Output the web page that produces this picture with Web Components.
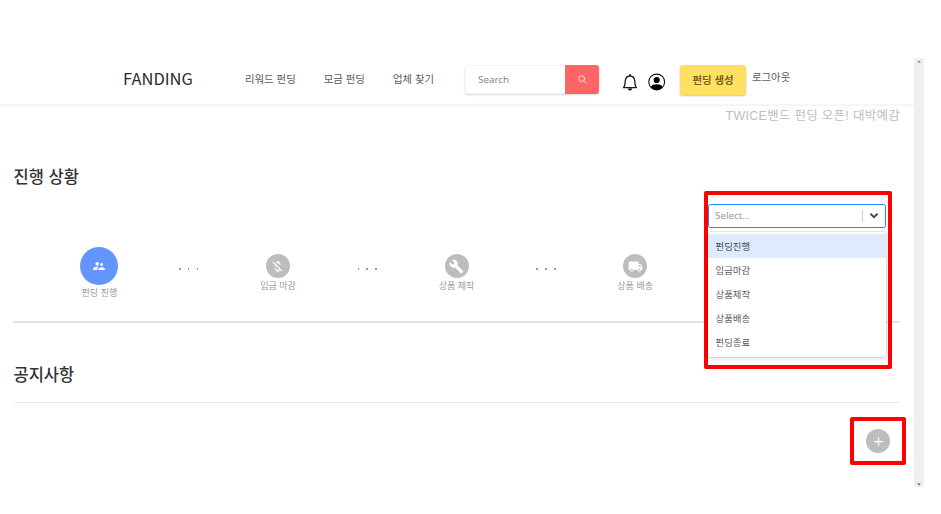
<!DOCTYPE html>
<html lang="ko">
<head>
<meta charset="utf-8">
<title>FANDING</title>
<style>
html,body{margin:0;background:#fff}
body{width:941px;height:514px;overflow:hidden;font-family:"Noto Sans CJK KR","Noto Sans",sans-serif;color:#555}
</style>
</head>
<body>
<fd-app></fd-app>
<script>
function define(name, html) {
  customElements.define(name, class extends HTMLElement {
    constructor() {
      super();
      this.attachShadow({ mode: 'open' });
    }
    connectedCallback() {
      const body = typeof html === 'function' ? html(this) : html;
      this.shadowRoot.innerHTML = '<style>*{box-sizing:border-box}</style>' + body;
    }
  });
}

const icons = {
  people: '<path d="M16.5 12c1.38 0 2.49-1.12 2.49-2.5S17.88 7 16.5 7 14 8.12 14 9.500s1.12 2.500 2.500 2.500zM9 11c1.660 0 2.990-1.340 2.990-3S10.660 5 9 5 6 6.340 6 8s1.340 3 3 3zm7.500 3c-1.830 0-5.500.92-5.500 2.750V19h11v-2.250c0-1.830-3.670-2.750-5.500-2.750zM9 13c-2.330 0-7 1.170-7 3.500V19h7v-2.250c0-.85.33-2.340 2.370-3.470C10.500 13.100 9.660 13 9 13z"/>',
  moneyOff: '<path d="M12.500 6.900c1.780 0 2.440.85 2.500 2.100h2.210c-.07-1.720-1.120-3.300-3.210-3.810V3h-3v2.160c-.53.12-1.030.3-1.480.54l1.470 1.470c.41-.17.91-.27 1.510-.27zM5.330 4.060L4.060 5.330 7.500 8.770c0 2.080 1.560 3.210 3.910 3.910l3.510 3.510c-.34.48-1.050.91-2.420.91-2.060 0-2.870-.92-2.980-2.100h-2.200c.12 2.190 1.760 3.420 3.680 3.830V21h3v-2.150c.96-.18 1.820-.55 2.450-1.120l2.220 2.220 1.270-1.270L5.330 4.060z"/>',
  build: '<path d="M22.700 19l-9.100-9.100c.9-2.300.4-5-1.500-6.900-2-2-5-2.400-7.400-1.300L9 6 6 9 1.600 4.700C.4 7.100.9 10.100 2.900 12.100c1.900 1.900 4.600 2.400 6.900 1.500l9.100 9.100c.4.4 1 .4 1.400 0l2.300-2.300c.5-.4.5-1.100.1-1.400z"/>',
  truck: '<path d="M20 8h-3V4H3c-1.100 0-2 .9-2 2v11h2c0 1.660 1.340 3 3 3s3-1.340 3-3h6c0 1.660 1.340 3 3 3s3-1.340 3-3h2v-5l-3-4zM6 18.500c-.83 0-1.500-.67-1.500-1.500s.67-1.500 1.500-1.500 1.500.67 1.500 1.500-.67 1.500-1.500 1.500zm13.500-9l1.960 2.500H17V9.500h2.500zm-1.500 9c-.83 0-1.500-.67-1.500-1.500s.67-1.500 1.500-1.500 1.500.67 1.500 1.500-.67 1.500-1.500 1.500z"/>',
  add: '<path d="M19 13h-6v6h-2v-6H5v-2h6V5h2v6h6v2z"/>'
};

define('fd-icon', el => `<style>:host{display:block;width:16px;height:16px}svg{display:block;width:100%;height:100%}</style>
<svg viewBox="0 0 24 24" fill="currentColor">${icons[el.getAttribute('name')]}</svg>`);

define('fd-nav', `<style>
:host{display:flex;gap:28px;font-size:10.400px;line-height:16px;color:#5c5c5c;white-space:nowrap}
</style><slot></slot>`);

define('fd-search', `<style>
:host{display:flex;width:134px;height:29px;border-radius:3px;border:1px solid #f3f3f3;box-shadow:0 1px 2px rgba(0,0,0,.16);background:#fff}
span{flex:1;padding-left:12px;font:9.800px/27px "Noto Sans",sans-serif;color:#858a90}
b{display:grid;place-items:center;width:34px;margin:-1px;height:29px;background:#ff6565;border-radius:0 3px 3px 0}
svg{display:block;margin-top:-1px}
</style><span>Search</span><b><svg width="9" height="9" viewBox="0 0 9 9" fill="none" stroke="#fff" stroke-width=".8" stroke-linecap="round"><circle cx="3.700" cy="3.700" r="2.900"/><path d="M5.900 5.900 8.300 8.300"/></svg></b>`);

define('fd-button', `<style>
:host{display:block;width:66px;height:30px;border-radius:3px;background:#ffe063;box-shadow:0 1px 2px rgba(0,0,0,.25);color:#75631a;font-size:10.400px;font-weight:700;line-height:29px;text-align:center;white-space:nowrap}
</style><slot></slot>`);

define('fd-header', `<style>
:host{display:flex;height:48px;border-bottom:2px solid #f6f6f6;align-items:flex-start;white-space:nowrap}
.logo{margin-left:123px;width:122px;padding-top:8px;font-size:16.500px;line-height:24px;color:#2c2c2c}
fd-nav{width:220px;padding-top:13px}
fd-search{margin-top:7px}
.bell{margin:15px 0 0 23px}
.user{margin:15px 0 0 10px}
fd-button{margin:7px 0 0 14px}
.out{margin:11px 0 0 6px;font-size:10.400px;line-height:16px;color:#5c5c5c}
svg{display:block}
</style>
<span class="logo">FANDING</span>
<fd-nav><span>리워드 펀딩</span><span>모금 펀딩</span><span>업체 찾기</span></fd-nav>
<fd-search></fd-search>
<svg class="bell" width="16" height="18" viewBox="0 0 16 18"><path d="M1.500 14.600h13c-1.300-1-1.500-2.300-1.700-6.200C12.600 5.200 10.800 3 8 3S3.400 5.200 3.200 8.400c-.2 3.900-.4 5.200-1.700 6.200z" fill="none" stroke="#1c1c1c" stroke-width="1.300" stroke-linejoin="round"/><path d="M6.800 2.800a1.200 1.700 0 0 1 2.400 0zM5.800 15.500h4.400a2.200 2 0 0 1-4.400 0z" fill="#111"/></svg>
<svg class="user" width="18" height="18" viewBox="0 0 18 18"><circle cx="8.700" cy="9" r="7.900" fill="#fff" stroke="#111" stroke-width="1.100"/><circle cx="8.700" cy="7" r="3.100"/><path d="M2.900 14c.6-2 3-2.700 5.800-2.700s5.200.7 5.800 2.700c-1.500 2-3.500 2.900-5.800 2.900S4.400 16 2.900 14z"/></svg>
<fd-button>펀딩 생성</fd-button>
<span class="out">로그아웃</span>`);

define('fd-badge', el => `<style>
:host{display:grid;place-items:center;width:24px;height:24px;border-radius:50%;background:#bdbdbd;color:#fff}
:host([active]){width:38px;height:38px;background:#6495fe}
fd-icon{width:15px;height:15px}
:host([active]) fd-icon{width:14px;height:14px}
</style><fd-icon name="${el.getAttribute('icon')}"></fd-icon>`);

define('fd-step', el => `<style>
:host{display:flex;flex-direction:column;align-items:center;justify-content:center;width:58px;height:54px;font-size:9px;line-height:16px;color:#999;white-space:nowrap}
</style><fd-badge icon="${el.getAttribute('icon')}" ${el.hasAttribute('active') ? 'active' : ''}></fd-badge><span><slot></slot></span>`);

define('fd-dots', `<style>
:host{display:flex;justify-content:center;gap:7.400px;width:120.600px}
i{width:1.600px;height:1.600px;background:#999}
</style><i></i><i></i><i></i>`);

define('fd-steps', `<style>
:host{display:flex;align-items:center;margin-left:70.400px;height:54px}
fd-dots{margin-top:-10px}
</style>
<fd-step icon="people" active>펀딩 진행</fd-step><fd-dots></fd-dots>
<fd-step icon="moneyOff">입금 마감</fd-step><fd-dots></fd-dots>
<fd-step icon="build">상품 제작</fd-step><fd-dots></fd-dots>
<fd-step icon="truck">상품 배송</fd-step>`);

define('fd-select', `<style>
:host{display:block;width:178px;font-size:9.400px;color:#5c5c5c}
.control{display:flex;align-items:center;height:24px;border:1px solid #2684ff;border-radius:2.500px;background:#fff;padding-left:6px}
.control span{flex:1;font:9.800px/22px "Noto Sans","Noto Sans CJK KR",sans-serif;color:#999}
.sep{width:1px;height:12px;background:#ccc}
svg{display:block;margin:0 7px}
.menu{margin-top:4px;height:125px;padding:2px 0;background:#fff;border-radius:2.500px;box-shadow:0 0 0 1px rgba(0,0,0,.08),0 2px 5px rgba(0,0,0,.12)}
.menu div{height:24.100px;line-height:24px;padding-left:7.500px}
.menu .on{background:#deebff;color:#444}
</style>
<div class="control"><span>Select...</span><i class="sep"></i><svg width="8" height="6" viewBox="0 0 8 6"><path d="M1 1.300 4 4.100 7 1.300" fill="none" stroke="#444" stroke-width="1.900" stroke-linecap="round"/></svg></div>
<div class="menu"><div class="on">펀딩진행</div><div>입금마감</div><div>상품제작</div><div>상품배송</div><div>펀딩종료</div></div>`);

define('fd-highlight', `<style>
:host{display:block;border:4px solid #f00;border-radius:2px}
</style><slot></slot>`);

define('fd-scrollbar', `<style>
:host{display:flex;flex-direction:column;justify-content:space-between;align-items:center;width:10px;background:#f0f0f0;padding:2px 0 1px}
svg{display:block}
</style>
<svg width="4" height="3" viewBox="0 0 4 3"><path d="M0 2.500h4L2 .3z" fill="#8c8c8c"/></svg>
<svg width="4" height="3" viewBox="0 0 4 3"><path d="M0 .3h4L2 2.700z" fill="#777"/></svg>`);

define('fd-app', `<style>
:host{display:flex;width:924px;height:429px;margin-top:58px}
main{position:relative;width:914px;display:flex;flex-direction:column}
.sub{margin:0 14px 0 0;padding-top:1px;text-align:right;font:12.500px/18px "Liberation Sans","Noto Sans CJK KR",sans-serif;letter-spacing:.28px;color:#bdbdbd}
h2{margin:0 0 0 13.500px;font-size:16.500px;line-height:24px;font-weight:500;color:#333}
.first{margin-top:39px}
fd-steps{margin-top:59px}
hr{border:0;margin:0 14px 0 13px;flex:none}
.h1{height:2px;background:#e4e4e4;margin-top:20px}
.second{margin-top:39px}
.h2{height:1px;background:#ececec;margin-top:16px}
.pick{position:absolute;left:704px;top:133px;width:188px;height:178px;padding:9px 0 0 0}
.add{width:56px;height:48px;align-self:flex-end;margin:14px 8px 0 0;padding:8px 0 0 12px}
</style>
<main>
<fd-header></fd-header>
<p class="sub">TWICE밴드 펀딩 오픈! 대박예감</p>
<h2 class="first">진행 상황</h2>
<fd-steps></fd-steps>
<hr class="h1">
<h2 class="second">공지사항</h2>
<hr class="h2">
<fd-highlight class="add"><fd-badge icon="add"></fd-badge></fd-highlight>
<fd-highlight class="pick"><fd-select></fd-select></fd-highlight>
</main>
<fd-scrollbar></fd-scrollbar>`);
</script>
</body>
</html>
